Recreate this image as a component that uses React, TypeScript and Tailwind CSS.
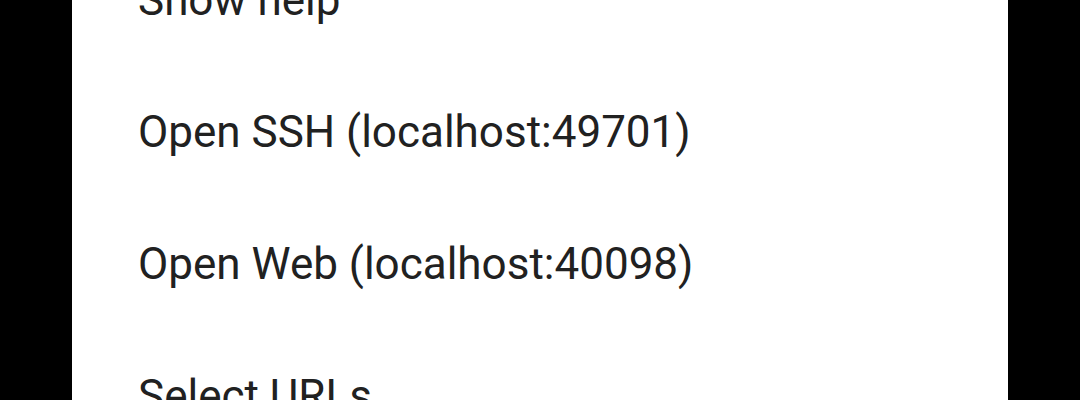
import React from "react";

const items = [
  "Show help",
  "Open SSH (localhost:49701)",
  "Open Web (localhost:40098)",
  "Select URLs",
];

export default function App() {
  return (
    <div className="w-[1080px] h-[400px] bg-black flex justify-center overflow-hidden">
      <div className="w-[936px] h-[400px] bg-white overflow-hidden">
        <div className="-mt-[66px] flex flex-col">
          {items.map((t) => (
            <div
              key={t}
              className="h-[132px] flex items-center pl-[66px] text-[44px] text-[#212121] font-['Roboto',sans-serif] leading-normal"
            >
              {t}
            </div>
          ))}
        </div>
      </div>
    </div>
  );
}
